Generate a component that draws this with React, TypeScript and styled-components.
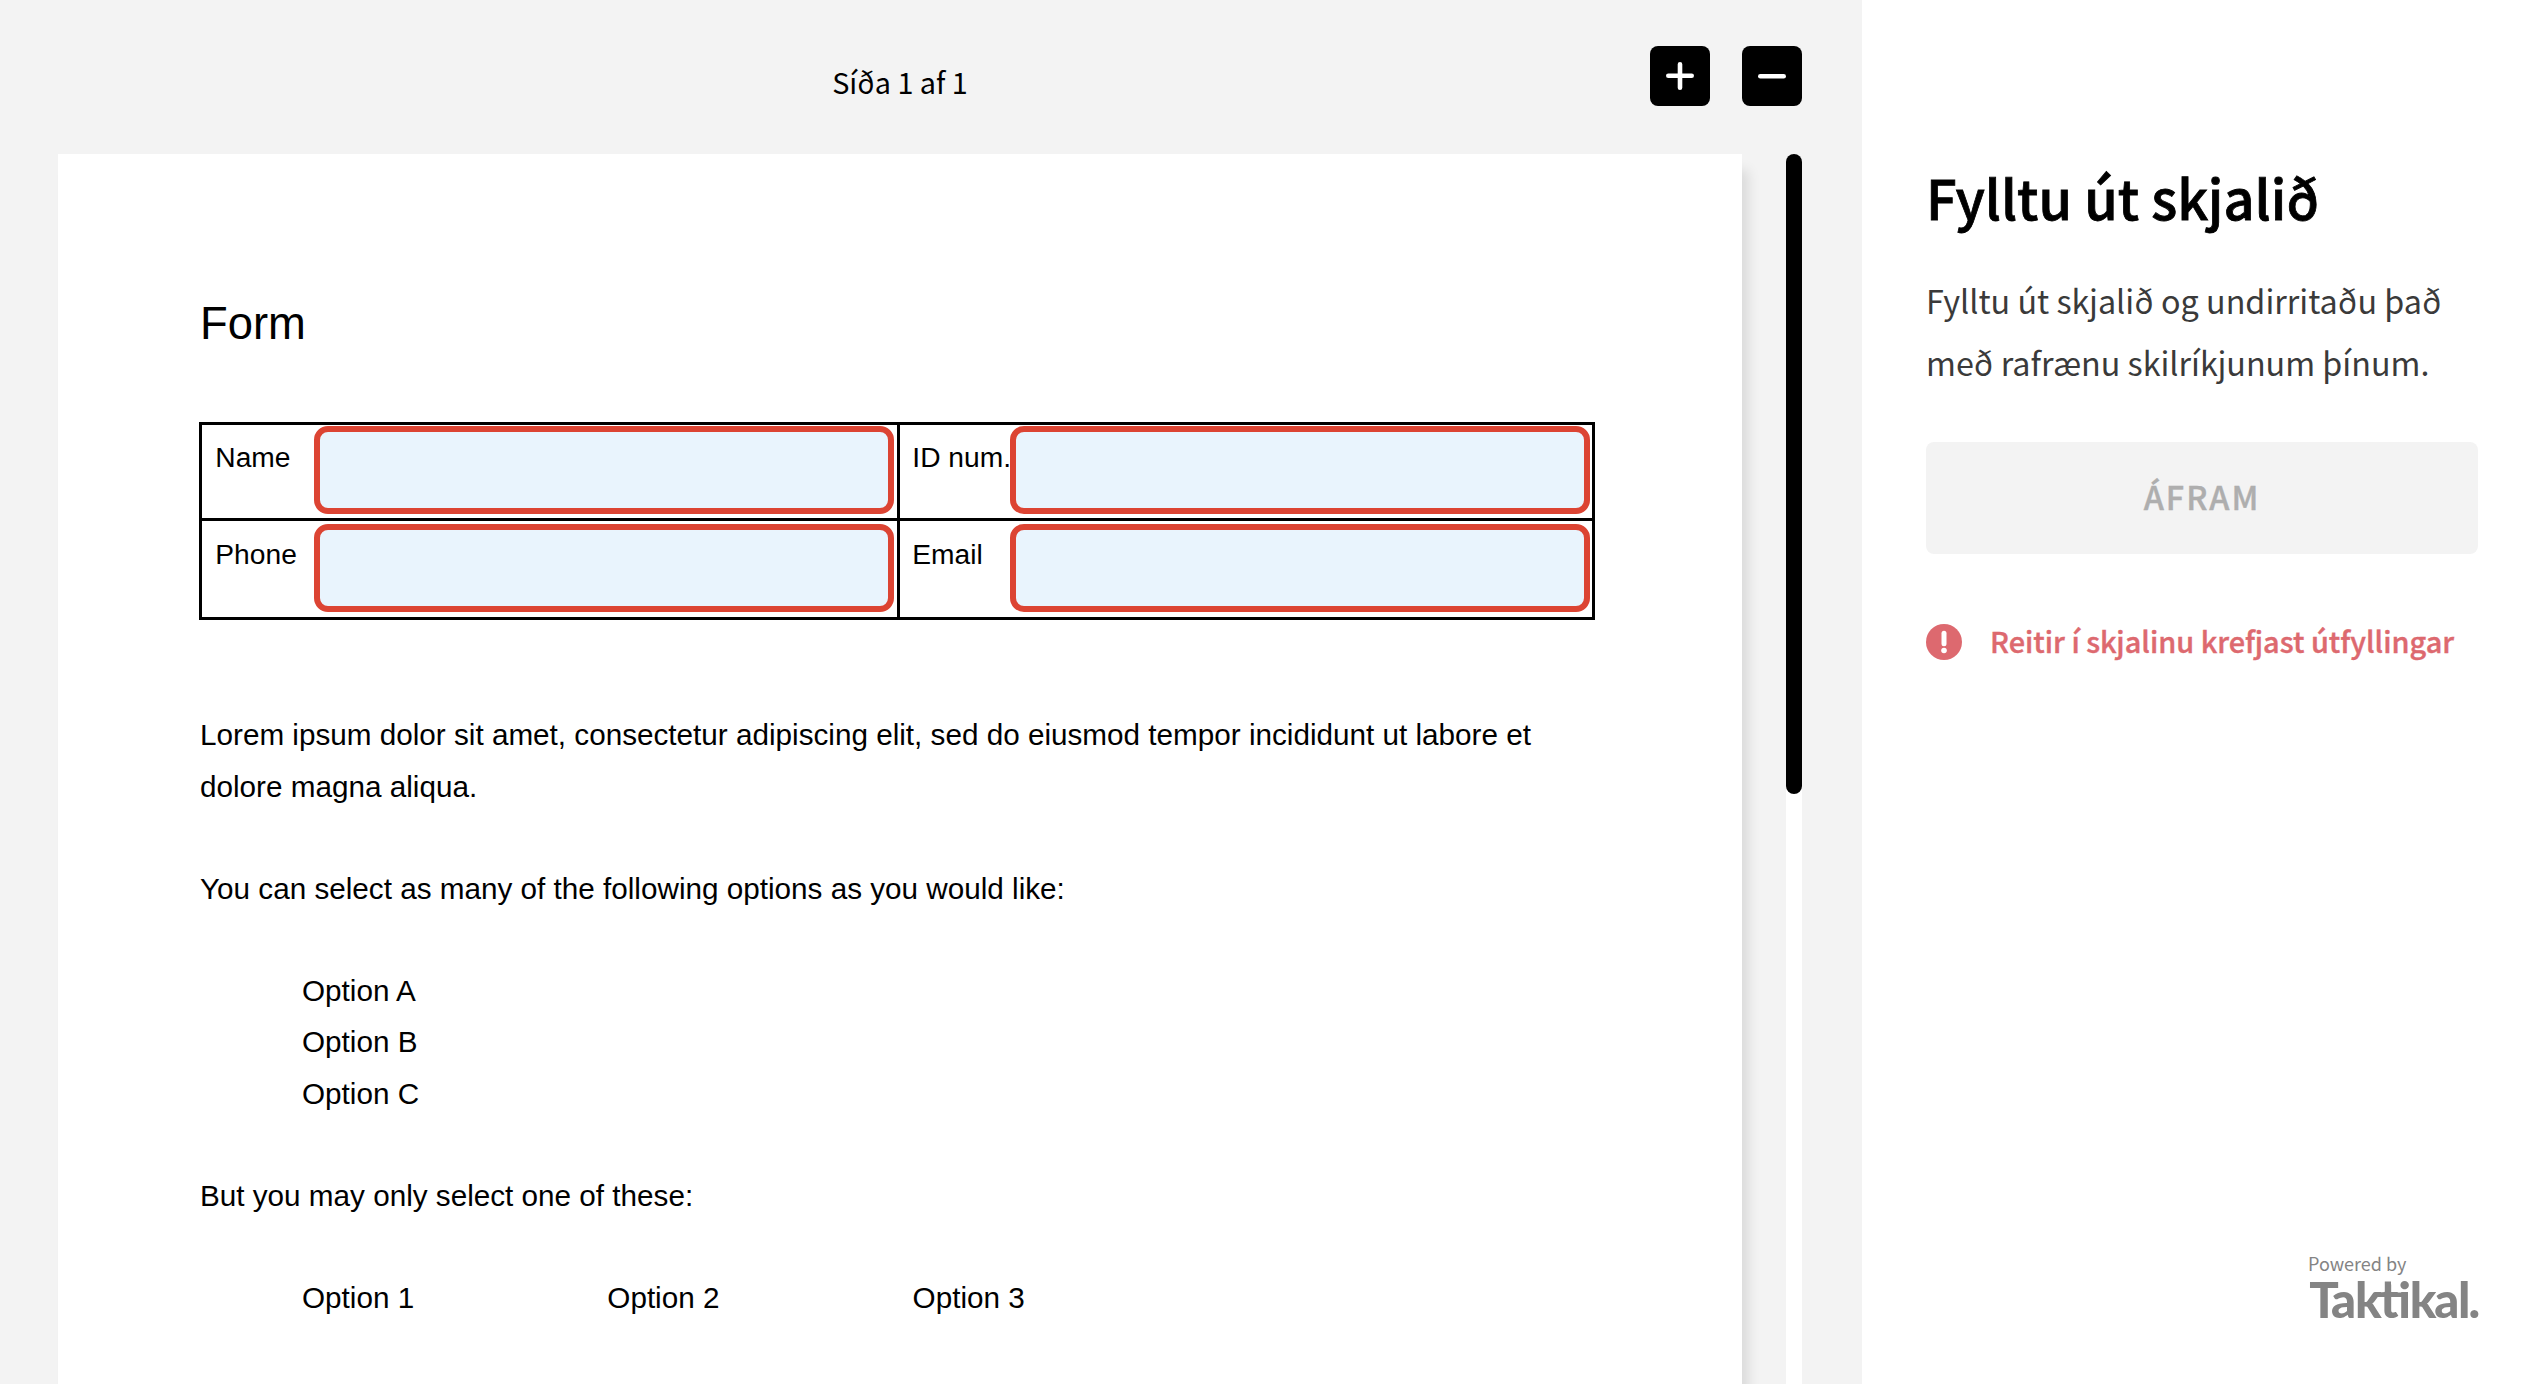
import React from "react";
import styled, { createGlobalStyle } from "styled-components";

const sans = '"Noto Sans CJK SC", "Noto Sans CJK JP", "Noto Sans", sans-serif';
const docFont = '"Liberation Sans", Arial, sans-serif';

const GlobalStyle = createGlobalStyle`
  *, *::before, *::after { box-sizing: border-box; }
  html, body { margin: 0; padding: 0; }
  body { overflow: hidden; background: #fff; font-family: ${sans}; }
`;

const Shell = styled.div`
  display: flex;
  width: 2538px;
  height: 1384px;
  overflow: hidden;
`;

const Viewer = styled.main`
  display: flex;
  flex-direction: column;
  width: 1862px;
  flex: none;
  padding: 0 60px 0 58px;
  background: #f3f3f3;
`;

const Toolbar = styled.header`
  display: flex;
  height: 154px;
  flex: none;
`;

const PageCount = styled.div`
  width: 1592px;
  padding: 62px 0 0 92px;
  text-align: center;
  font-size: 28.8px;
  line-height: 40px;
  color: #000;
`;

const ZoomButtons = styled.div`
  display: flex;
  gap: 32px;
  padding-top: 46px;
`;

const ZoomButton = styled.button`
  display: flex;
  align-items: center;
  justify-content: center;
  width: 60px;
  height: 60px;
  padding: 0;
  border: 0;
  border-radius: 8px;
  background: #000;
`;

const ViewerBody = styled.div`
  display: flex;
  justify-content: space-between;
  flex: 1;
  min-height: 0;
`;

const Sheet = styled.article`
  width: 1684px;
  height: 1500px;
  padding: 140px 142px 0;
  background: #fff;
  box-shadow: 8px 14px 12px -2px rgba(0, 0, 0, 0.11);
  font-family: ${docFont};
  color: #000;
`;

const Track = styled.div`
  width: 16px;
  height: 1500px;
  border-radius: 8px;
  background: #fff;
`;

const Thumb = styled.div`
  height: 640px;
  border-radius: 8px;
  background: #000;
`;

const DocTitle = styled.h1`
  margin: 0 0 68px;
  font-size: 45.4px;
  font-weight: 400;
  line-height: 60px;
`;

const FieldTable = styled.div`
  display: grid;
  grid-template-columns: 695px 692px;
  grid-template-rows: 93px 96px;
  gap: 3px;
  width: 1396px;
  margin-left: -1px;
  padding: 3px;
  background: #000;
`;

const Cell = styled.div<{ $top: number; $inset: number }>`
  display: flex;
  align-items: flex-start;
  padding: ${(p) => p.$top}px ${(p) => p.$inset}px 0 0;
  background: #fff;
`;

const Label = styled.label<{ $top: number; $left: number }>`
  flex: 1;
  min-width: 0;
  padding: ${(p) => p.$top}px 0 0 ${(p) => p.$left}px;
  font-size: 28.2px;
  line-height: 32px;
  white-space: nowrap;
`;

const Field = styled.input`
  width: 580px;
  height: 88px;
  flex: none;
  padding: 0 16px;
  border: 6px solid #dc4433;
  border-radius: 14px;
  outline: 0;
  background: #e9f4fd;
`;

const Copy = styled.div`
  padding-top: 89.4px;
  font-size: 29.68px;
  line-height: 51.18px;
`;

const Para = styled.p`
  margin: 0 0 51.18px;
  white-space: nowrap;
`;

const OptionList = styled.ul`
  margin: 0 0 51.18px;
  padding: 0 0 0 102px;
  list-style: none;
`;

const OptionRow = styled.ul`
  display: grid;
  grid-template-columns: repeat(3, 305.3px);
  margin: 0;
  padding: 0 0 0 102px;
  list-style: none;
`;

const Panel = styled.aside`
  display: flex;
  flex-direction: column;
  flex: 1;
  padding: 161px 60px 65px 64px;
  background: #fff;
`;

const PanelTitle = styled.h2`
  margin: 0;
  font-size: 54.1px;
  font-weight: 500;
  line-height: 72px;
  -webkit-text-stroke: 0.8px #000;
  color: #000;
  white-space: nowrap;
`;

const PanelText = styled.p`
  margin: 36px 0 49px;
  font-size: 32.3px;
  line-height: 62px;
  color: #3a3a3a;
  white-space: nowrap;
`;

const Continue = styled.button`
  width: 552px;
  height: 112px;
  flex: none;
  padding: 0 0 6px;
  border: 0;
  border-radius: 8px;
  background: #f3f3f3;
  font-family: ${sans};
  font-size: 32.4px;
  font-weight: 500;
  letter-spacing: 2px;
  -webkit-text-stroke: 0.4px #aeaeae;
  color: #aeaeae;
`;

const Alert = styled.div`
  display: flex;
  align-items: center;
  gap: 28px;
  margin-top: 68px;
  height: 40px;
  font-size: 28.9px;
  font-weight: 500;
  line-height: 40px;
  -webkit-text-stroke: 0.4px #dd696f;
  color: #dd696f;
  white-space: nowrap;
`;

const AlertText = styled.span`
  padding-bottom: 4px;
`;

const Brand = styled.footer`
  align-self: flex-end;
  width: 170px;
  margin-top: auto;
  color: #848484;
`;

const Powered = styled.div`
  font-size: 18px;
  line-height: 24px;
`;

const Logo = styled.svg`
  display: block;
  overflow: visible;
  fill: #848484;
  font-family: Lato, sans-serif;
  font-size: 49px;
  font-weight: 900;
`;

export default function App() {
  return (
    <>
      <GlobalStyle />
      <Shell>
        <Viewer>
          <Toolbar>
            <PageCount>Síða 1 af 1</PageCount>
            <ZoomButtons>
              <ZoomButton aria-label="+">
                <svg width="28" height="28" viewBox="0 0 28 28" stroke="#fff" strokeWidth="4.6" strokeLinecap="round">
                  <path d="M2.3 13.8h23.4M14 2.3v23.4" />
                </svg>
              </ZoomButton>
              <ZoomButton aria-label="-">
                <svg width="28" height="28" viewBox="0 0 28 28" stroke="#fff" strokeWidth="4.6" strokeLinecap="round">
                  <path d="M2.3 14.3h23.4" />
                </svg>
              </ZoomButton>
            </ZoomButtons>
          </Toolbar>
          <ViewerBody>
            <Sheet>
              <DocTitle>Form</DocTitle>
              <FieldTable>
                <Cell $top={1} $inset={3}>
                  <Label $top={15} $left={13.3}>Name</Label>
                  <Field />
                </Cell>
                <Cell $top={1} $inset={2}>
                  <Label $top={15} $left={12.3}>ID num.</Label>
                  <Field />
                </Cell>
                <Cell $top={3} $inset={3}>
                  <Label $top={14} $left={13.3}>Phone</Label>
                  <Field />
                </Cell>
                <Cell $top={3} $inset={2}>
                  <Label $top={14} $left={12.3}>Email</Label>
                  <Field />
                </Cell>
              </FieldTable>
              <Copy>
                <Para>
                  Lorem ipsum dolor sit amet, consectetur adipiscing elit, sed do eiusmod tempor incididunt ut labore et
                  <br />
                  dolore magna aliqua.
                </Para>
                <Para>You can select as many of the following options as you would like:</Para>
                <OptionList>
                  <li>Option A</li>
                  <li>Option B</li>
                  <li>Option C</li>
                </OptionList>
                <Para>But you may only select one of these:</Para>
                <OptionRow>
                  <li>Option 1</li>
                  <li>Option 2</li>
                  <li>Option 3</li>
                </OptionRow>
              </Copy>
            </Sheet>
            <Track>
              <Thumb />
            </Track>
          </ViewerBody>
        </Viewer>
        <Panel>
          <PanelTitle>Fylltu út skjalið</PanelTitle>
          <PanelText>
            Fylltu út skjalið og undirritaðu það
            <br />
            með rafrænu skilríkjunum þínum.
          </PanelText>
          <Continue>ÁFRAM</Continue>
          <Alert>
            <svg width="36" height="36" viewBox="0 0 36 36">
              <circle cx="18" cy="18" r="18" fill="#dd696f" />
              <path d="M18 9.3v10.4" stroke="#fff" strokeWidth="5" strokeLinecap="round" />
              <circle cx="18" cy="26.5" r="2.8" fill="#fff" />
            </svg>
            <AlertText>Reitir í skjalinu krefjast útfyllingar</AlertText>
          </Alert>
          <Brand>
            <Powered>Powered by</Powered>
            <Logo width="170" height="44" viewBox="0 0 170 44">
              <text x="1.2 23 47 72 90.2 101.7 126.2 150 160.4" y="42.7">
                Taktikal.
              </text>
              <rect x="68" y="17.5" width="31" height="4.5" />
              <rect x="76.8" y="6.5" width="6.2" height="14" />
            </Logo>
          </Brand>
        </Panel>
      </Shell>
    </>
  );
}
